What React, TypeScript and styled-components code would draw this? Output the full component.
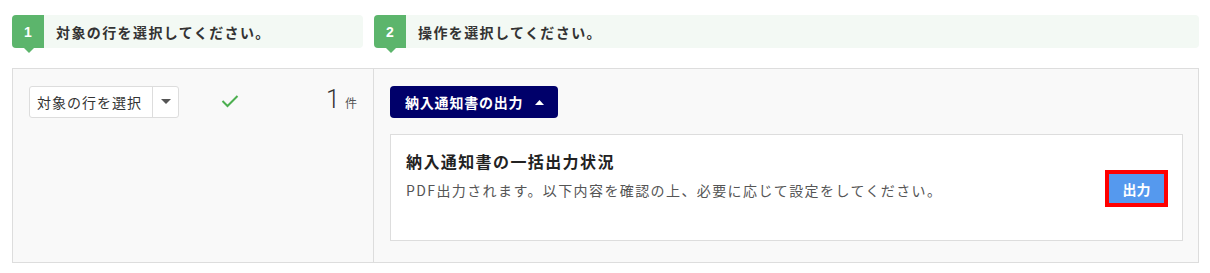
import React from 'react'
import styled, { createGlobalStyle } from 'styled-components';

const GlobalStyle = createGlobalStyle`
    body {
        margin: 0;
        background: #fff;
        font-family: "Noto Sans CJK JP", "Noto Sans", sans-serif;
        color: #333;
    }
`;

const App = () => {
  return (
      <Page>
          <GlobalStyle />
          <Steps>
              <Step>
                  <Badge>1</Badge>
                  <StepText>対象の行を選択してください。</StepText>
              </Step>
              <Step>
                  <Badge>2</Badge>
                  <StepText>操作を選択してください。</StepText>
              </Step>
          </Steps>
          <Panel>
              <LeftCol>
                  <Select>
                      <SelectLabel>対象の行を選択</SelectLabel>
                      <SelectCaret>
                          <svg width="10" height="6" viewBox="0 0 10 6">
                              <path d="M0 0 L10 0 L5 5 Z" fill="#555" />
                          </svg>
                      </SelectCaret>
                  </Select>
                  <Check width="18" height="14" viewBox="0 0 18 14">
                      <path d="M1.5 7 L6.5 12 L16.5 2" fill="none" stroke="#4caf50" strokeWidth="2" />
                  </Check>
                  <Count>
                      <CountNum>1</CountNum>
                      <CountUnit>件</CountUnit>
                  </Count>
              </LeftCol>
              <RightCol>
                  <MenuButton>
                      納入通知書の出力
                      <svg width="9" height="5" viewBox="0 0 9 5">
                          <path d="M0 5 L4.5 0 L9 5 Z" fill="#fff" />
                      </svg>
                  </MenuButton>
                  <Card>
                      <CardBody>
                          <CardTitle>納入通知書の一括出力状況</CardTitle>
                          <CardDesc>PDF出力されます。以下内容を確認の上、必要に応じて設定をしてください。</CardDesc>
                      </CardBody>
                      <OutputButton>出力</OutputButton>
                  </Card>
              </RightCol>
          </Panel>
      </Page>
  )
}

const Page = styled.div`
    padding: 15px 11px 0 12px;
    width: 1187px;
`;

const Steps = styled.div`
    display: grid;
    grid-template-columns: 362px 1fr;
`;

const Step = styled.div`
    display: flex;
    align-items: center;
    height: 33px;
    background: #f3f9f4;
    border-radius: 4px;

    &:first-child {
        margin-right: 11px;
    }
`;

const Badge = styled.div`
    position: relative;
    width: 32px;
    height: 33px;
    display: flex;
    align-items: center;
    justify-content: center;
    background: #5cb56c;
    color: #fff;
    font-weight: bold;
    font-size: 14px;
    border-radius: 4px 0 0 4px;
    font-family: "Liberation Sans", sans-serif;

    &::after {
        content: '';
        position: absolute;
        left: 12px;
        bottom: -5px;
        border-left: 5px solid transparent;
        border-right: 5px solid transparent;
        border-top: 5px solid #5cb56c;
    }
`;

const StepText = styled.span`
    margin-left: 12px;
    font-size: 14px;
    letter-spacing: 1.4px;
    font-weight: bold;
    color: #333;
`;

const Panel = styled.div`
    margin-top: 20px;
    display: grid;
    grid-template-columns: 361px 1fr;
    height: 193px;
    border: 1px solid #ddd;
    background: #f9f9f9;
`;

const LeftCol = styled.div`
    display: flex;
    align-items: flex-start;
    padding: 17px 16px 0 16px;
    border-right: 1px solid #ddd;
`;

const Select = styled.div`
    display: flex;
    height: 30px;
    width: 148px;
    border: 1px solid #ddd;
    border-radius: 3px;
    background: #fff;
`;

const SelectLabel = styled.span`
    flex: 1;
    display: flex;
    align-items: center;
    padding-left: 7px;
    font-size: 14px;
    letter-spacing: 1px;
    color: #333;
    border-right: 1px solid #ddd;
`;

const SelectCaret = styled.span`
    width: 25px;
    display: flex;
    align-items: center;
    justify-content: center;
`;

const Check = styled.svg`
    margin: 8px 0 0 42px;
`;

const Count = styled.div`
    margin-left: auto;
    display: flex;
    align-items: baseline;
    margin-top: -1px;
`;

const CountNum = styled.span`
    font-family: Roboto, sans-serif;
    font-weight: 300;
    font-size: 25px;
    color: #333;
`;

const CountUnit = styled.span`
    margin-left: 5px;
    font-size: 12px;
    color: #555;
`;

const RightCol = styled.div`
    padding: 17px 15px 0 16px;
`;

const MenuButton = styled.button`
    display: flex;
    align-items: center;
    gap: 12px;
    height: 32px;
    padding: 0 14px 0 15px;
    border: none;
    border-radius: 4px;
    background: #00006a;
    color: #fff;
    font-family: "Noto Sans CJK JP", sans-serif;
    font-size: 14px;
    letter-spacing: 0.8px;
    font-weight: bold;
`;

const Card = styled.div`
    margin-top: 16px;
    height: 105px;
    display: flex;
    align-items: center;
    padding: 0 18px 0 15px;
    background: #fff;
    border: 1px solid #ddd;
`;

const CardBody = styled.div`
    flex: 1;
    align-self: flex-start;
    padding-top: 14px;
`;

const CardTitle = styled.div`
    font-size: 16px;
    letter-spacing: 1.4px;
    font-weight: bold;
    color: #222;
    line-height: 24px;
`;

const CardDesc = styled.div`
    margin-top: 7px;
    font-size: 14px;
    letter-spacing: 1.4px;
    color: #555;
    line-height: 20px;
`;

const OutputButton = styled.button`
    width: 55px;
    height: 29px;
    border: none;
    background: #5599ee;
    color: #fff;
    font-family: "Noto Sans CJK JP", sans-serif;
    font-size: 14px;
    font-weight: bold;
    box-shadow: 0 0 0 4px #ff0000;
    margin-top: 2px;
`;

export default App;
